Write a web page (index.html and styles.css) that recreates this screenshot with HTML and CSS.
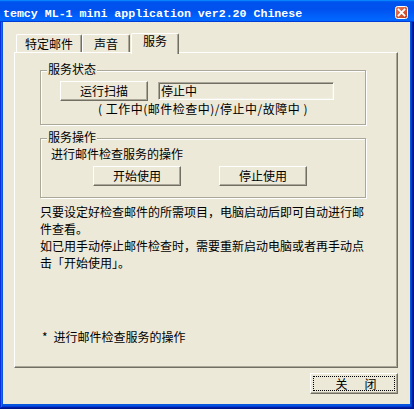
FILE: index.html
```html
<!DOCTYPE html>
<html lang="zh-CN">
<head>
<meta charset="utf-8">
<link rel="stylesheet" href="styles.css">
</head>
<body>
<div class="window">
  <div class="titlebar">
    <span class="title">temcy ML-1 mini application ver2.20 Chinese</span>
    <svg class="close" width="13" height="13" viewBox="0 0 13 13">
      <defs>
        <linearGradient id="cg" x1="0" y1="0" x2="1" y2="1">
          <stop offset="0" stop-color="#e9805f"/>
          <stop offset="1" stop-color="#c43b17"/>
        </linearGradient>
      </defs>
      <rect x="0.5" y="0.5" width="12" height="12" rx="2" fill="url(#cg)" stroke="#fff"/>
      <path d="M3.6 3.6 L9.4 9.4 M9.4 3.6 L3.6 9.4" stroke="#fff" stroke-width="1.9" stroke-linecap="square"/>
    </svg>
  </div>
  <div class="client">
    <div class="tabs">
      <div class="tab">特定邮件</div>
      <div class="tab">声音</div>
      <div class="tab active">服务</div>
    </div>
    <div class="panel">
      <div class="group status">
        <span class="legend">服务状态</span>
        <div class="row">
          <button class="btn">运行扫描</button>
          <div class="edit">停止中</div>
        </div>
        <div class="hint">( 工作中(邮件检查中)/停止中/故障中 )</div>
      </div>
      <div class="group ops">
        <span class="legend">服务操作</span>
        <div class="label">进行邮件检查服务的操作</div>
        <div class="buttons">
          <button class="btn">开始使用</button>
          <button class="btn">停止使用</button>
        </div>
      </div>
      <div class="desc">
        <p>只要设定好检查邮件的所需项目，电脑启动后即可自动进行邮件查看。</p>
        <p>如已用手动停止邮件检查时，需要重新启动电脑或者再手动点击「开始使用」。</p>
      </div>
      <div class="note">*&ensp;进行邮件检查服务的操作</div>
    </div>
    <div class="footer">
      <button class="btn default">关<span class="gap"></span>闭</button>
    </div>
  </div>
</div>
</body>
</html>
```

FILE: styles.css
```css
* { box-sizing: border-box; }
html, body { margin: 0; padding: 0; }
body {
  width: 414px;
  height: 409px;
  overflow: hidden;
  background: #0855dd;
  font-family: "Noto Sans CJK SC", sans-serif;
  font-size: 12px;
  color: #000;
}
.window {
  width: 414px;
  height: 409px;
  display: flex;
  flex-direction: column;
  background: #0855dd;
  box-shadow: inset -1px -1px #00138c, inset 1px 1px #0831d9,
              inset -2px -2px #001ea0, inset 2px 2px #166aee,
              inset -3px -3px #003bda, inset 3px 3px #0855dd;
}
.titlebar {
  height: 22px;
  flex: none;
  display: flex;
  align-items: flex-start;
  padding: 0 6px 0 3px;
  color: #fff;
  background: linear-gradient(180deg, #0997ff 0%, #0053ee 8%, #0050ee 40%, #0066ff 88%, #0066ff 93%, #005bff 95%, #003dd7 96%, #003dd7 100%);
}
.title {
  flex: 1;
  margin-top: 7px;
  font: bold 11.6px/13px "Liberation Mono", monospace;
  white-space: pre;
}
.close { flex: none; margin-top: 6px; }
.client {
  flex: 1;
  margin: 0 4px 5px 3px;
  background: #ece9d8;
  display: flex;
  flex-direction: column;
  padding: 11px 12px 0 11px;
}
.tabs {
  display: flex;
  align-items: flex-end;
  height: 19px;
  flex: none;
  padding-left: 2px;
  position: relative;
  z-index: 1;
}
.tab {
  min-width: 48px;
  height: 18px;
  padding: 0 8px;
  line-height: 17px;
  text-align: center;
  border: 1px solid;
  border-color: #fff #716f64 transparent #fff;
  border-bottom: none;
  border-radius: 2px 2px 0 0;
  box-shadow: inset -1px 0 #aca899;
  background: #ece9d8;
}
.tab.active {
  height: 21px;
  margin-bottom: -2px;
  margin-left: 1px;
  line-height: 14px;
}
.panel {
  height: 316px;
  flex: none;
  border: 1px solid;
  border-color: #fff #716f64 #716f64 #fff;
  box-shadow: inset -1px -1px #aca899;
  padding: 17px 0 0 25px;
  display: flex;
  flex-direction: column;
  align-items: flex-start;
}
.group {
  position: relative;
  width: 326px;
  border: 1px solid #aca899;
  box-shadow: 1px 1px #fff, inset 1px 1px #fff;
}
.legend {
  position: absolute;
  top: -9px;
  left: 6px;
  padding: 0 1px;
  line-height: 14px;
  background: #ece9d8;
}
.status { height: 55px; padding-top: 10px; }
.row { display: flex; align-items: center; padding-left: 19px; }
.edit {
  width: 176px;
  height: 18px;
  margin-left: 10px;
  border: 1px solid;
  border-color: #aca899 #fff #fff #aca899;
  box-shadow: inset 1px 1px #716f64, inset -1px -1px #f1efe2;
  padding: 0 2px;
  line-height: 16px;
}
.hint { text-align: center; line-height: 14px; margin-top: 1px; letter-spacing: 0.5px; }
.ops { height: 60px; margin-top: 13px; padding-top: 8px; }
.label { padding-left: 10px; line-height: 14px; }
.buttons { display: flex; gap: 38px; padding-left: 52px; margin-top: 5px; }
.desc { margin-top: 5px; width: 326px; line-height: 17px; }
.desc p { margin: 0; }
.note { margin-top: 57px; margin-left: 2px; line-height: 17px; }
.footer { display: flex; justify-content: flex-end; margin-top: 5px; }
.btn {
  width: 88px;
  height: 20px;
  padding: 0;
  font: 12px/16px "Noto Sans CJK SC", sans-serif;
  color: #000;
  background: #ece9d8;
  border: 1px solid;
  border-color: #fff #716f64 #716f64 #fff;
  box-shadow: inset -1px -1px #aca899;
  position: relative;
}
.btn.default { height: 21px; padding-left: 4px; }
.btn.default::after {
  content: "";
  position: absolute;
  inset: 2px;
  border: 1px dotted #000;
}
.gap { display: inline-block; width: 17px; }
```
